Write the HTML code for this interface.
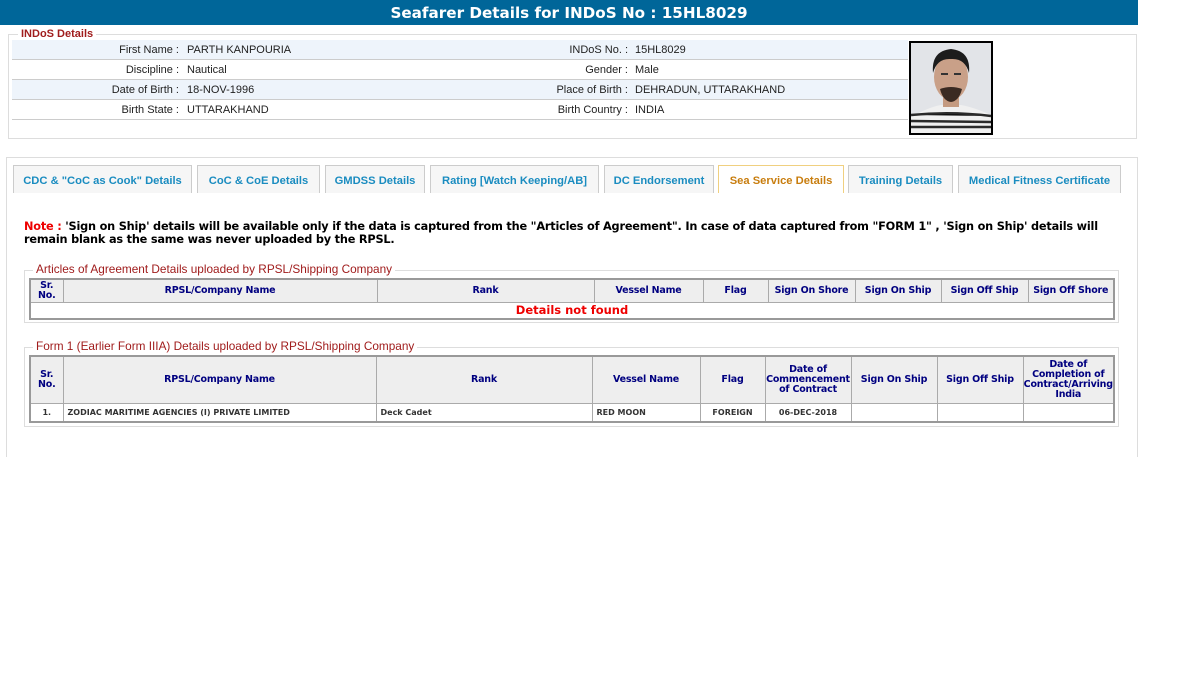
<!DOCTYPE html>
<html><head><meta charset="utf-8"><style>
*{margin:0;padding:0;box-sizing:border-box}
body{width:1200px;height:673px;background:#fff;position:relative;font-family:"Liberation Sans",Arial,sans-serif;overflow:hidden}
.abs{position:absolute}
.title{left:0;top:0;width:1138px;height:25px;background:#006699;color:#fff;font:bold 15.2px "DejaVu Sans",sans-serif;text-align:center;line-height:27px}
.fs{border:1px solid #ddd}
.leg{background:#fff;color:#a01c1c;font-size:11px;font-weight:bold;padding:0 3px;line-height:12px}
.row{left:12px;width:896px;height:20px;border-bottom:1px solid #ccc;font-size:11px;color:#222;line-height:21px}
.row.a{background:#eef4fb}
.row span{position:absolute;white-space:nowrap}
.l1{right:729px;text-align:right}
.v1{left:175px}
.l2{right:280px;text-align:right}
.v2{left:623px}
.tab{top:165px;height:28px;background:#f6f6f6;border:1px solid #ccc;border-bottom:none;color:#1a8cc0;font-size:11.2px;font-weight:bold;text-align:center;line-height:30px;white-space:nowrap}
.tab.act{background:#fff;border-color:#f0d080;color:#c87d0e}
.note{left:24px;top:220px;width:1095px;font:bold 11.3px "DejaVu Sans",Verdana,sans-serif;line-height:13px;color:#000;letter-spacing:-0.2px}
.leg2{color:#a01c1c;font-size:11.8px;background:#fff;padding:0 3px;line-height:13px}
table{position:absolute;border-collapse:collapse;table-layout:fixed;border:2px solid #999;font-family:"DejaVu Sans",Verdana,sans-serif}
th{background:#eee;color:#000080;font-size:9.5px;font-weight:bold;border:1px solid #aaa;line-height:10px;letter-spacing:-0.2px}
td{border:1px solid #aaa;font-size:8px;font-weight:bold;color:#333;padding-left:4px}
</style></head><body>
<div class="abs title">Seafarer Details for INDoS No : 15HL8029</div>

<div class="abs fs" style="left:8px;top:34px;width:1129px;height:105px"></div>
<div class="abs leg" style="left:18px;top:28px">INDoS Details</div>
<div class="abs row a" style="top:40px"><span class="l1">First Name :</span><span class="v1">PARTH KANPOURIA</span><span class="l2">INDoS No. :</span><span class="v2">15HL8029</span></div>
<div class="abs row" style="top:60px"><span class="l1">Discipline :</span><span class="v1">Nautical</span><span class="l2">Gender :</span><span class="v2">Male</span></div>
<div class="abs row a" style="top:80px"><span class="l1">Date of Birth :</span><span class="v1">18-NOV-1996</span><span class="l2">Place of Birth :</span><span class="v2">DEHRADUN, UTTARAKHAND</span></div>
<div class="abs row" style="top:100px"><span class="l1">Birth State :</span><span class="v1">UTTARAKHAND</span><span class="l2">Birth Country :</span><span class="v2">INDIA</span></div>

<div class="abs" style="left:909px;top:41px;width:84px;height:94px;border:2px solid #000;background:#e4e6ea;overflow:hidden">
<svg width="80" height="90" viewBox="0 0 80 90">
<rect width="80" height="90" fill="#e2e4e8"/>
<path d="M0 90 L0 74 Q18 64 30 62 L50 62 Q62 64 80 72 L80 90Z" fill="#f0f0f0"/>
<g stroke="#2a2a2a" stroke-width="2.4"><path d="M0 72 Q40 68 80 73"/><path d="M0 78 L80 79"/><path d="M0 84 L80 84"/></g>
<rect x="32" y="50" width="16" height="14" fill="#c49a80"/>
<ellipse cx="40" cy="34" rx="17" ry="23" fill="#c9a088"/>
<path d="M22 30 Q20 8 40 6 Q60 8 58 30 Q54 15 40 16 Q26 15 22 30Z" fill="#1c1c1c"/>
<path d="M29 46 Q40 42 51 46 Q48 58 40 59 Q32 58 29 46Z" fill="#3a2a22"/>
<rect x="30" y="30" width="7" height="2" fill="#333"/><rect x="43" y="30" width="7" height="2" fill="#333"/>
</svg></div>

<div class="abs fs" style="left:6px;top:157px;width:1132px;height:300px;border-bottom:none"></div>
<div class="abs tab" style="left:13px;width:179px">CDC &amp; "CoC as Cook" Details</div>
<div class="abs tab" style="left:197px;width:123px">CoC &amp; CoE Details</div>
<div class="abs tab" style="left:325px;width:100px">GMDSS Details</div>
<div class="abs tab" style="left:430px;width:169px">Rating [Watch Keeping/AB]</div>
<div class="abs tab" style="left:604px;width:110px">DC Endorsement</div>
<div class="abs tab act" style="left:718px;width:126px">Sea Service Details</div>
<div class="abs tab" style="left:848px;width:105px">Training Details</div>
<div class="abs tab" style="left:958px;width:163px">Medical Fitness Certificate</div>

<div class="abs note"><span style="color:#e00">Note :</span> 'Sign on Ship' details will be available only if the data is captured from the "Articles of Agreement". In case of data captured from "FORM 1" , 'Sign on Ship' details will remain blank as the same was never uploaded by the RPSL.</div>

<div class="abs fs" style="left:24px;top:270px;width:1095px;height:53px"></div>
<div class="abs leg2" style="left:33px;top:263px">Articles of Agreement Details uploaded by RPSL/Shipping Company</div>
<table style="left:29px;top:278px;width:1086px">
<colgroup><col style="width:33px"><col style="width:314px"><col style="width:217px"><col style="width:109px"><col style="width:65px"><col style="width:87px"><col style="width:86px"><col style="width:87px"><col></colgroup>
<tr style="height:23px"><th>Sr.<br>No.</th><th>RPSL/Company Name</th><th>Rank</th><th>Vessel Name</th><th>Flag</th><th>Sign On Shore</th><th>Sign On Ship</th><th>Sign Off Ship</th><th>Sign Off Shore</th></tr>
<tr style="height:17px"><td colspan="9" style="text-align:center;color:#e00;font-size:11.5px;padding:0">Details not found</td></tr>
</table>

<div class="abs fs" style="left:24px;top:347px;width:1095px;height:80px"></div>
<div class="abs leg2" style="left:33px;top:340px">Form 1 (Earlier Form IIIA) Details uploaded by RPSL/Shipping Company</div>
<table style="left:29px;top:355px;width:1086px">
<colgroup><col style="width:33px"><col style="width:313px"><col style="width:216px"><col style="width:108px"><col style="width:65px"><col style="width:86px"><col style="width:86px"><col style="width:86px"><col></colgroup>
<tr style="height:47px"><th>Sr.<br>No.</th><th>RPSL/Company Name</th><th>Rank</th><th>Vessel Name</th><th>Flag</th><th>Date of Commencement of Contract</th><th>Sign On Ship</th><th>Sign Off Ship</th><th>Date of Completion of Contract/Arriving India</th></tr>
<tr style="height:19px"><td style="text-align:center;padding:0">1.</td><td>ZODIAC MARITIME AGENCIES (I) PRIVATE LIMITED</td><td>Deck Cadet</td><td>RED MOON</td><td style="text-align:center;padding:0">FOREIGN</td><td style="text-align:center;padding:0">06-DEC-2018</td><td></td><td></td><td></td></tr>
</table>
</body></html>
